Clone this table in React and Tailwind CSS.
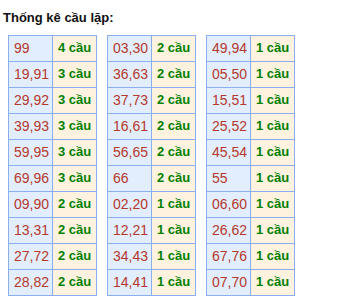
import React from "react";

const tables = [
  [["99", 4], ["19,91", 3], ["29,92", 3], ["39,93", 3], ["59,95", 3], ["69,96", 3], ["09,90", 2], ["13,31", 2], ["27,72", 2], ["28,82", 2]],
  [["03,30", 2], ["36,63", 2], ["37,73", 2], ["16,61", 2], ["56,65", 2], ["66", 2], ["02,20", 1], ["12,21", 1], ["34,43", 1], ["14,41", 1]],
  [["49,94", 1], ["05,50", 1], ["15,51", 1], ["25,52", 1], ["45,54", 1], ["55", 1], ["06,60", 1], ["26,62", 1], ["67,76", 1], ["07,70", 1]],
];

export default function App() {
  return (
    <div className="w-[344px] h-[304px] bg-white pt-[8px] pl-[3px]" style={{ fontFamily: '"Liberation Sans", Arial, sans-serif' }}>
      <div className="text-[13px] leading-5 font-bold text-[#111]">Thống kê cầu lặp:</div>
      <div className="flex gap-[10px] mt-[7px] ml-[5px]">
        {tables.map((t, i) => (
          <div key={i} className="grid grid-cols-[44px_44px] border-l border-t border-[#8aaef0] w-[89px]">
            {t.map(([n, c], j) => (
              <React.Fragment key={j}>
                <div className="h-[26px] border-r border-b border-[#8aaef0] bg-[#e2eefe] pl-[5px] pt-[4px] text-[14px] leading-4 text-[#b5382a]">{n}</div>
                <div className="h-[26px] border-r border-b border-[#8aaef0] bg-[#fff3e0] pl-[5px] pt-[4px] text-[13px] leading-4 font-bold text-[#008000]">{c} cầu</div>
              </React.Fragment>
            ))}
          </div>
        ))}
      </div>
    </div>
  );
}
